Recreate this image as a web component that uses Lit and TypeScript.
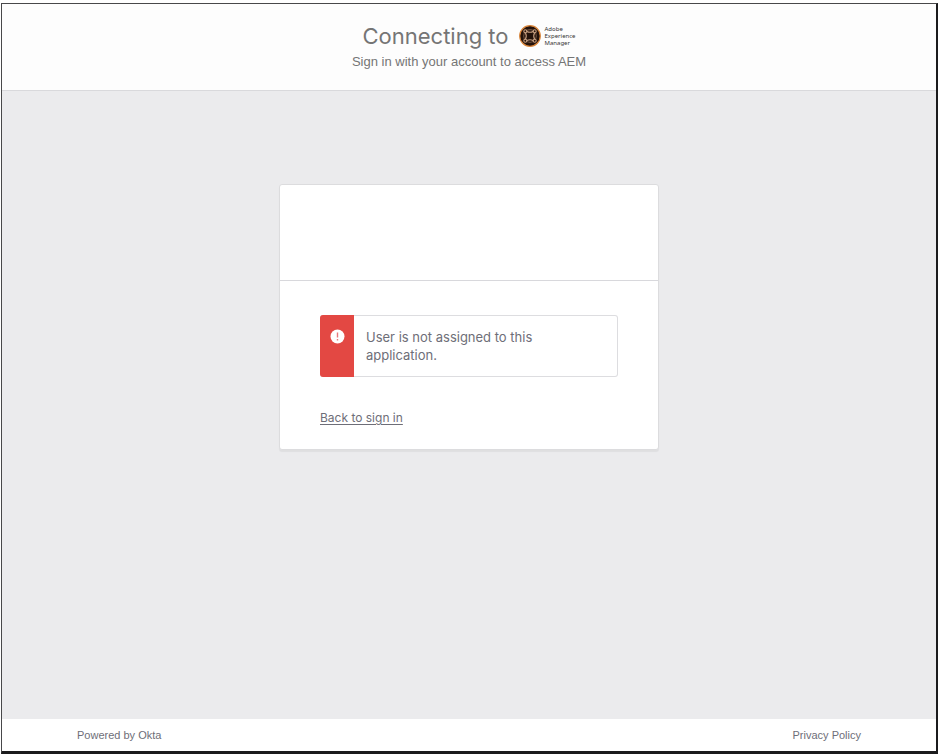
import { LitElement, html, css } from "lit";
import { customElement } from "lit/decorators.js";

@customElement("app-root")
export class AppRoot extends LitElement {
  static styles = css`
    :host {
      display: block;
      box-sizing: border-box;
      height: 100vh;
      padding: 3px 2px 0 1px;
      background: #fff;
      color: #6e6e78;
      font-family: Inter, "Liberation Sans", sans-serif;
    }
    .window {
      box-sizing: border-box;
      height: 100%;
      display: flex;
      flex-direction: column;
      border: solid #1b1b1d;
      border-width: 1px 2px 3px 1px;
      border-top-color: #48484a;
      border-left-color: #48484a;
      background: #ebebed;
    }
    header {
      display: flex;
      flex-direction: column;
      align-items: center;
      padding: 16px 0 18px;
      border-bottom: 1px solid #d9d9dc;
      background: #fdfdfd;
      color: #757575;
    }
    .title {
      display: flex;
      align-items: center;
      gap: 10px;
    }
    h1 {
      margin: 0;
      font-size: 22px;
      line-height: 32px;
      font-weight: 400;
    }
    .brand {
      display: flex;
      align-items: center;
      gap: 4px;
      color: #333;
      font: 6px/7px "Noto Sans", sans-serif;
    }
    .brand svg {
      display: block;
      width: 22px;
      height: 22px;
    }
    .brand span {
      display: block;
    }
    .subtitle {
      margin: 0;
      font-family: "Liberation Sans", sans-serif;
      font-size: 13px;
      line-height: 20px;
    }
    main {
      flex: 1;
      padding-top: 93px;
    }
    .card {
      box-sizing: border-box;
      width: 380px;
      max-width: 100%;
      margin: 0 auto;
      border: 1px solid #dcdcde;
      border-radius: 3px;
      background: #fff;
      box-shadow: 0 2px 1px rgba(0, 0, 0, 0.05);
    }
    .logo {
      height: 95px;
      border-bottom: 1px solid #d8d8dc;
    }
    .content {
      padding: 34px 40px 22px;
    }
    .alert {
      display: flex;
      border: 1px solid #dddde0;
      border-left: 0;
      border-radius: 3px;
    }
    .mark {
      display: flex;
      justify-content: center;
      width: 34px;
      padding-top: 14px;
      margin: -1px 0;
      border-radius: 3px 0 0 3px;
      background: #e34843;
    }
    .mark svg {
      width: 15px;
      height: 15px;
    }
    .alert p {
      flex: 1;
      margin: 0;
      padding: 12px 72px 12px 12px;
      font-size: 13px;
      line-height: 18px;
    }
    a {
      color: inherit;
    }
    .back {
      display: inline-block;
      margin-top: 32px;
      font-size: 12px;
      line-height: 18px;
      text-underline-offset: 2px;
    }
    footer {
      display: flex;
      justify-content: space-between;
      padding: 7px 75px;
      background: #fff;
      font-family: "Liberation Sans", sans-serif;
      font-size: 11px;
      line-height: 18px;
    }
    footer a {
      text-decoration: none;
    }
  `;

  render() {
    return html`
      <div class="window">
        <header>
          <div class="title">
            <h1>Connecting to</h1>
            <div class="brand">
              <svg viewBox="0 0 22 22" aria-hidden="true">
                <circle cx="11" cy="11" r="10.3" fill="#24120a" stroke="#d9853a" stroke-width="1.2" />
                <g fill="none" stroke="#c9a182" stroke-width="1.1">
                  <path d="M7.8 6.4Q11 8.2 14.2 6.4M15.6 7.8Q13.8 11 15.6 14.2M14.2 15.6Q11 13.8 7.8 15.6M6.4 14.2Q8.2 11 6.4 7.8" />
                  <path d="M7.6 5.4Q11 3.9 14.4 5.4M16.6 7.6Q18.1 11 16.6 14.4M14.4 16.6Q11 18.1 7.6 16.6M5.4 14.4Q3.9 11 5.4 7.6" stroke-opacity=".45" />
                  <circle cx="6.3" cy="6.3" r="1.5" />
                  <circle cx="15.7" cy="6.3" r="1.5" />
                  <circle cx="6.3" cy="15.7" r="1.5" />
                  <circle cx="15.7" cy="15.7" r="1.5" />
                </g>
              </svg>
              <div><span>Adobe</span><span>Experience</span><span>Manager</span></div>
            </div>
          </div>
          <p class="subtitle">Sign in with your account to access AEM</p>
        </header>
        <main>
          <section class="card">
            <div class="logo"></div>
            <div class="content">
              <div class="alert" role="alert">
                <div class="mark">
                  <svg viewBox="0 0 15 15" aria-hidden="true">
                    <circle cx="7.5" cy="7.5" r="7" fill="#fff" />
                    <path d="M7.5 3.6V8.6M7.5 9.9V11.4" stroke="#e8777a" stroke-width="1.4" />
                  </svg>
                </div>
                <p>User is not assigned to this application.</p>
              </div>
              <a class="back" href="#signin">Back to sign in</a>
            </div>
          </section>
        </main>
        <footer>
          <span>Powered by <a href="#okta">Okta</a></span>
          <a href="#privacy">Privacy Policy</a>
        </footer>
      </div>
    `;
  }
}
